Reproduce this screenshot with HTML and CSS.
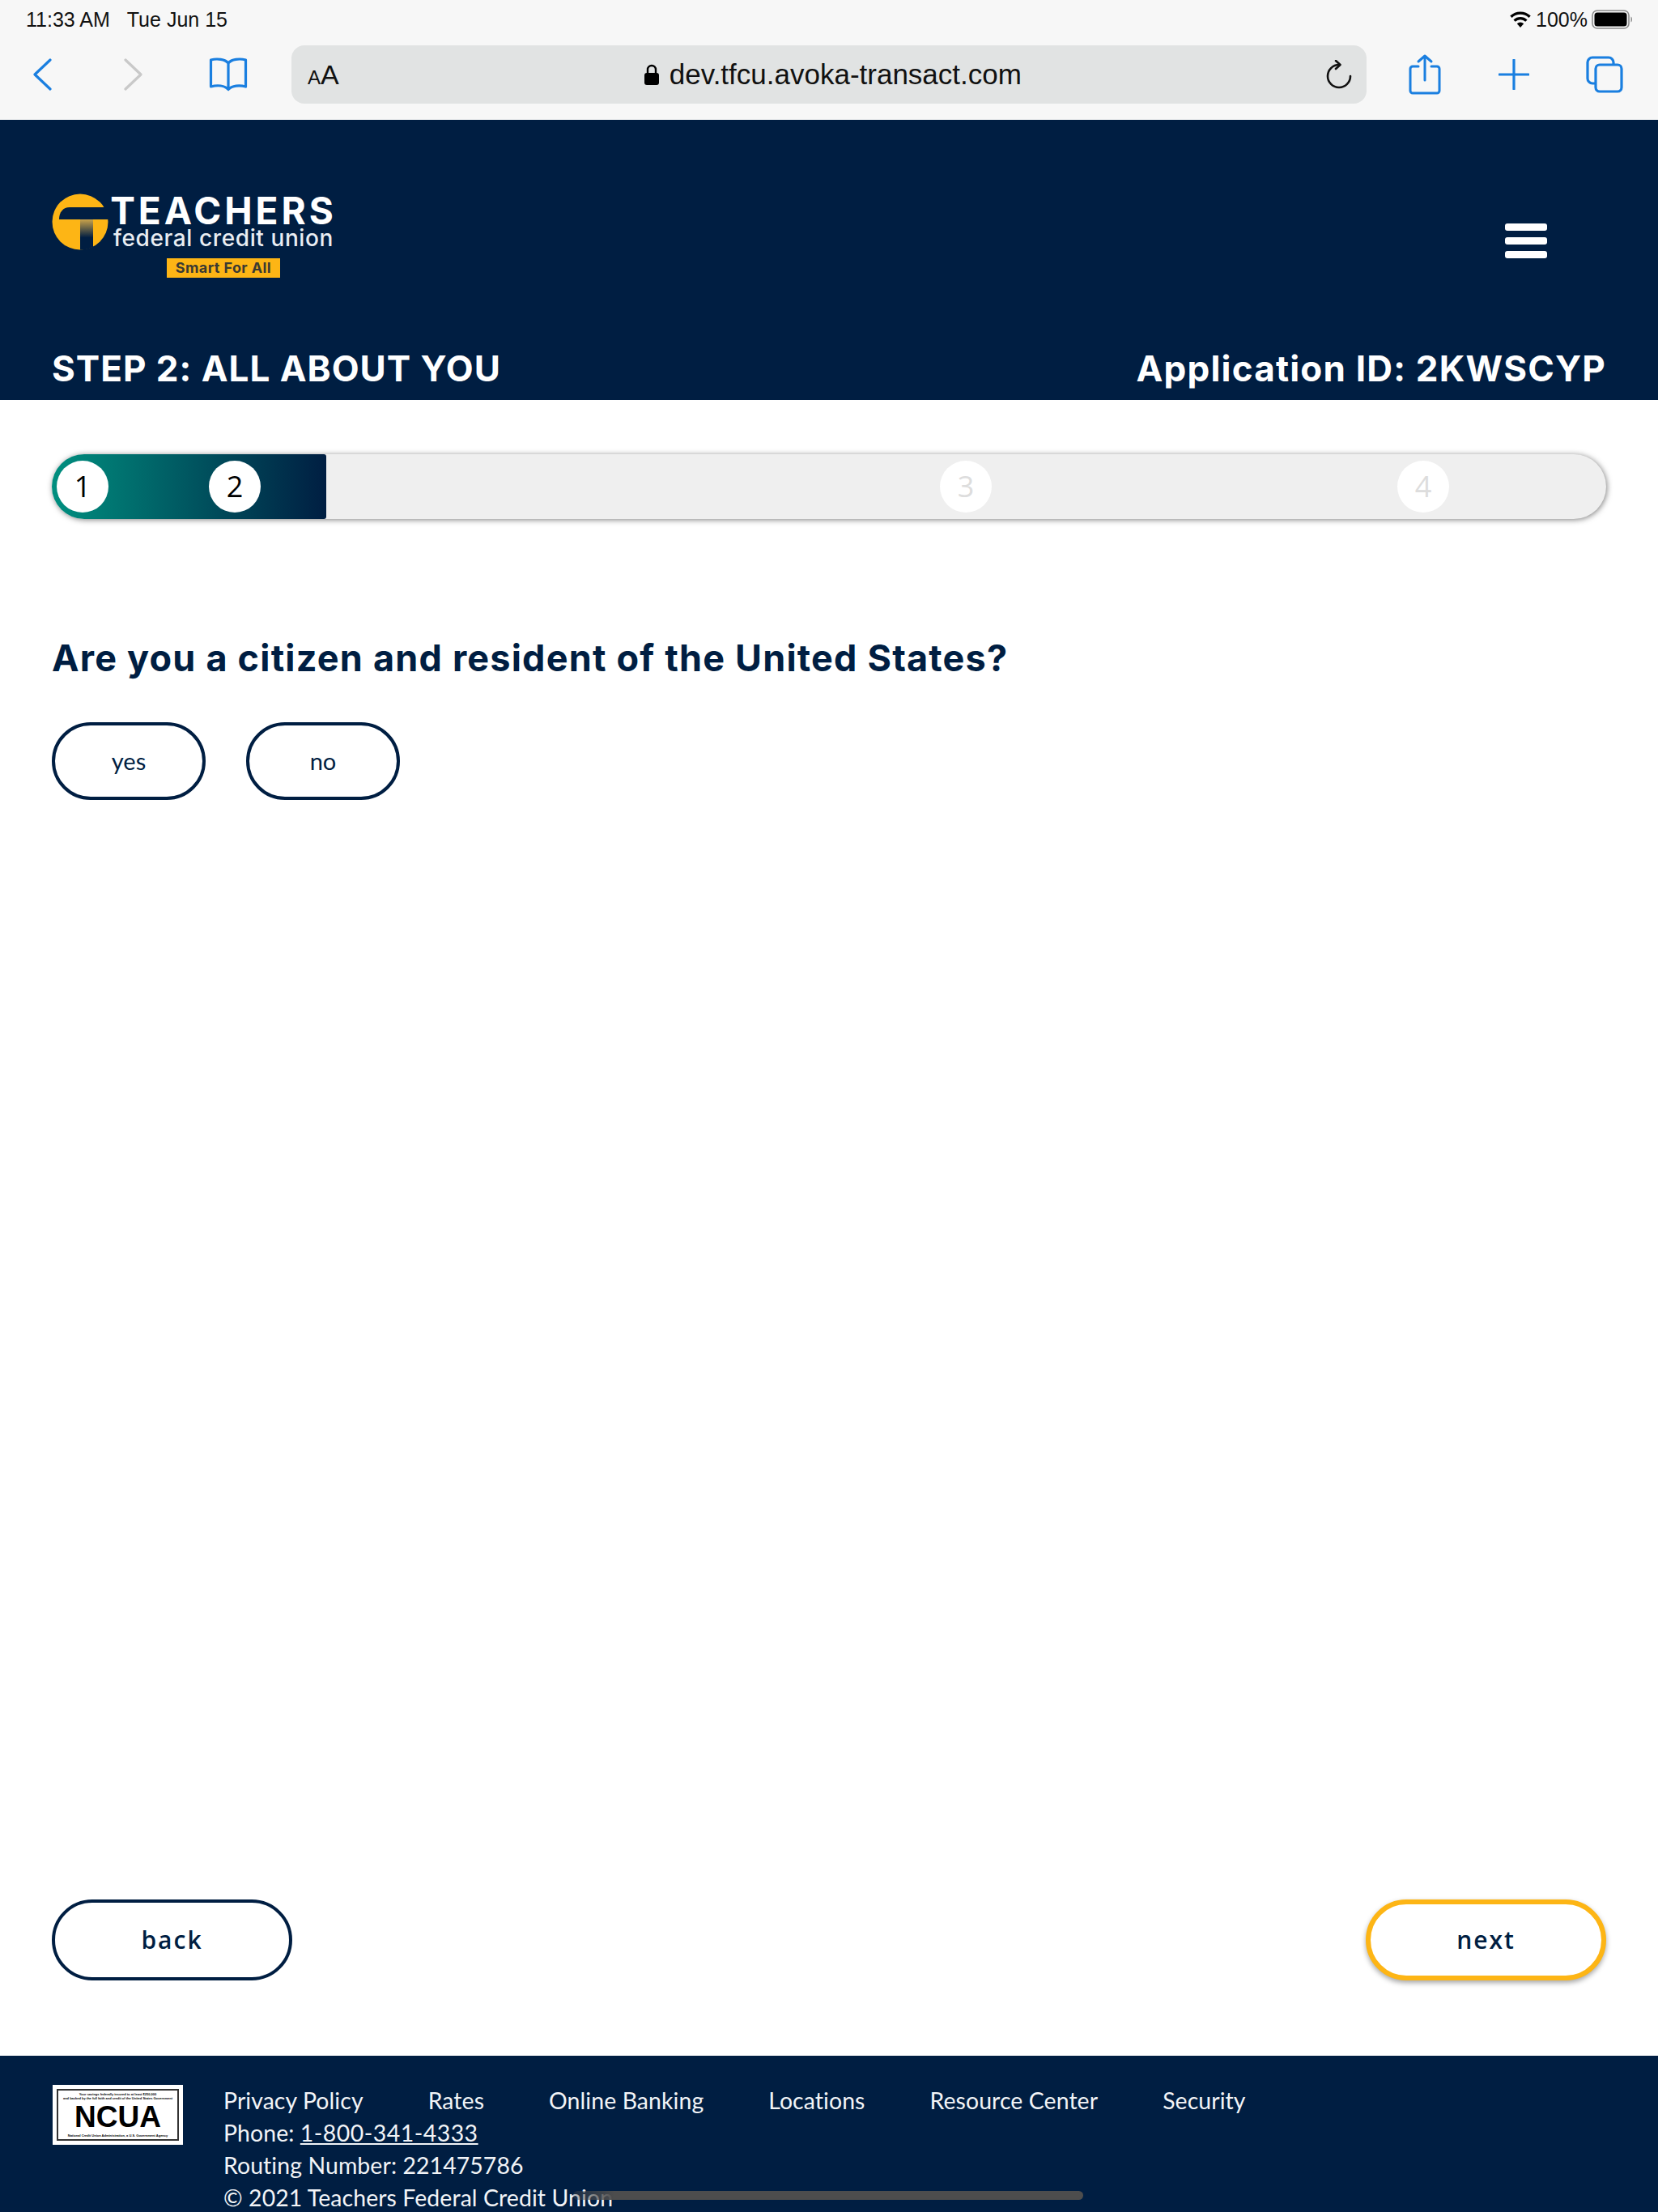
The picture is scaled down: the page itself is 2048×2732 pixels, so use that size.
FILE: index.html
```html
<!DOCTYPE html>
<html lang="en">
<head>
    <meta charset="UTF-8">
    <title>Teachers Federal Credit Union</title>
    <link rel="stylesheet" href="styles.css">
</head>
<body>
    <!-- Safari chrome -->
    <div class="browser">
        <div class="status-bar">
            <div class="status-time"><span>11:33 AM</span><span>Tue Jun 15</span></div>
            <div class="status-right">
                <svg class="wifi" width="28" height="22" viewBox="0 0 28 22"><path d="M14 21l-4.200-4.800a6 6 0 0 1 8.400 0z" fill="#000"/><path d="M6.600 12.600a10.600 10.600 0 0 1 14.800 0M2.400 7.800a16.800 16.800 0 0 1 23.200 0" fill="none" stroke="#000" stroke-width="3.400"/></svg>
                <span>100%</span>
                <svg class="battery" width="52" height="24" viewBox="0 0 52 24"><rect x="1" y="1" width="45" height="22" rx="6" fill="none" stroke="#8a8a8a" stroke-width="1.600"/><rect x="3.500" y="3.500" width="40" height="17" rx="3.500" fill="#000"/><path d="M48.500 8.500c2 .6 2 6.400 0 7z" fill="#8a8a8a"/></svg>
            </div>
        </div>
        <div class="toolbar">
            <div class="nav-icons">
                <svg width="26" height="40" viewBox="0 0 26 40"><path d="M23 2L4 20l19 18" fill="none" stroke="#1a7fe0" stroke-width="3.200" stroke-linecap="round" stroke-linejoin="round"/></svg>
                <svg width="26" height="40" viewBox="0 0 26 40"><path d="M3 2l19 18L3 38" fill="none" stroke="#c9c9c9" stroke-width="3.200" stroke-linecap="round" stroke-linejoin="round"/></svg>
                <svg width="48" height="42" viewBox="0 0 48 42"><path d="M24 7C20 2 10 1 2.500 3v33c8-2 17-1.500 21.500 3.500C28.500 34.500 38 34 45.500 36V3C38 1 28 2 24 7zM24 7v32" fill="none" stroke="#1a7fe0" stroke-width="3.200" stroke-linejoin="round"/></svg>
            </div>
            <div class="address-bar">
                <span class="aa"><small>A</small>A</span>
                <span class="url">
                    <svg width="20" height="26" viewBox="0 0 20 26"><path d="M5 12V7a5 5 0 0 1 10 0v5" fill="none" stroke="#000" stroke-width="2.400"/><rect x="1" y="11" width="18" height="15" rx="3" fill="#000"/></svg>
                    dev.tfcu.avoka-transact.com
                </span>
                <svg width="32" height="36" viewBox="0 0 32 36"><path d="M16 6A14 14 0 1 0 30 20" fill="none" stroke="#111" stroke-width="2.600" stroke-linecap="round"/><path d="M12 1l5.500 5-5.500 5" fill="none" stroke="#111" stroke-width="2.600" stroke-linecap="round" stroke-linejoin="round"/></svg>
            </div>
            <div class="action-icons">
                <svg width="40" height="50" viewBox="0 0 40 50"><path d="M12 15H5a3 3 0 0 0-3 3v27a3 3 0 0 0 3 3h30a3 3 0 0 0 3-3V18a3 3 0 0 0-3-3h-7M20 32V2M12 9l8-7 8 7" fill="none" stroke="#1a7fe0" stroke-width="3" stroke-linecap="round" stroke-linejoin="round"/></svg>
                <svg width="38" height="38" viewBox="0 0 38 38"><path d="M19 1v36M1 19h36" fill="none" stroke="#1a7fe0" stroke-width="3.200" stroke-linecap="round"/></svg>
                <svg width="46" height="46" viewBox="0 0 46 46"><rect x="12" y="11" width="32" height="33" rx="5" fill="none" stroke="#1a7fe0" stroke-width="3.200"/><path d="M12 34H8a6 6 0 0 1-6-6V8a6 6 0 0 1 6-6h20a6 6 0 0 1 6 6v3" fill="none" stroke="#1a7fe0" stroke-width="3.200"/></svg>
            </div>
        </div>
    </div>

    <!-- Site header -->
    <header class="site-header">
        <div class="header-top">
            <div class="logo">
                <svg class="logo-mark" width="70" height="70" viewBox="0 0 70 70">
                    <defs>
                        <linearGradient id="stem" x1="0" y1="0" x2="0" y2="1">
                            <stop offset="0" stop-color="#c9a24a"/>
                            <stop offset="0.6" stop-color="#001e42"/>
                        </linearGradient>
                    </defs>
                    <circle cx="35" cy="35" r="34.500" fill="#fdb515"/>
                    <path d="M9 32c0-9 5-15 13-15h47a34 34 0 0 1 .6 15z" fill="#001e42"/>
                    <path d="M35 32h16v34a34 34 0 0 1-16 3.500z" fill="url(#stem)"/>
                </svg>
                <div class="logo-text">
                    <div class="logo-name">TEACHERS</div>
                    <div class="logo-sub">federal credit union</div>
                    <div class="logo-tag">Smart For All</div>
                </div>
            </div>
            <div class="hamburger"><span></span><span></span><span></span></div>
        </div>
        <div class="header-bottom">
            <div class="step-title">STEP 2: ALL ABOUT YOU</div>
            <div class="app-id">Application ID: 2KWSCYP</div>
        </div>
    </header>

    <main class="content">
        <div class="progress">
            <div class="progress-fill"></div>
            <div class="step step-1 done">1</div>
            <div class="step step-2 done">2</div>
            <div class="step step-3">3</div>
            <div class="step step-4">4</div>
        </div>

        <h1 class="question">Are you a citizen and resident of the United States?</h1>
        <div class="answers">
            <button class="answer">yes</button>
            <button class="answer">no</button>
        </div>

        <div class="nav-buttons">
            <button class="nav-button">back</button>
            <button class="nav-button next">next</button>
        </div>
    </main>

    <footer class="site-footer">
        <div class="ncua">
            <div class="ncua-inner">
                <div class="ncua-small">Your savings federally insured to at least $250,000<br>and backed by the full faith and credit of the United States Government</div>
                <div class="ncua-name">NCUA</div>
                <div class="ncua-small">National Credit Union Administration, a U.S. Government Agency</div>
            </div>
        </div>
        <div class="footer-text">
            <div class="footer-links">
                <span>Privacy Policy</span>
                <span>Rates</span>
                <span>Online Banking</span>
                <span>Locations</span>
                <span>Resource Center</span>
                <span>Security</span>
            </div>
            <div>Phone: <a href="#">1-800-341-4333</a></div>
            <div>Routing Number: 221475786</div>
            <div>© 2021 Teachers Federal Credit Union</div>
        </div>
    </footer>

    <div class="home-indicator"></div>
</body>
</html>
```

FILE: styles.css
```css
html, body {
    margin: 0;
    height: 2732px;
    overflow: hidden;
}

body {
    position: relative;
    display: flex;
    flex-direction: column;
    background-color: #fff;
    font-family: "Lato", sans-serif;
}

/* Browser chrome */
.browser {
    height: 148px;
    flex: none;
    background-color: #f7f7f7;
    font-family: "Liberation Sans", sans-serif;
}

.status-bar {
    height: 48px;
    padding: 0 30px 0 32px;
    display: flex;
    justify-content: space-between;
    align-items: center;
    font-size: 25px;
    color: #111;
}

.status-time {
    display: flex;
    gap: 21px;
}

.status-right {
    display: flex;
    align-items: center;
    gap: 5px;
}

.toolbar {
    height: 72px;
    margin-top: 8px;
    display: flex;
    align-items: center;
}

.nav-icons {
    width: 360px;
    flex: none;
    box-sizing: border-box;
    padding-left: 39px;
    padding-right: 54px;
    display: flex;
    justify-content: space-between;
    align-items: center;
}

.nav-icons svg:nth-child(2) {
    margin-left: 6px;
}

.address-bar {
    width: 1328px;
    height: 72px;
    flex: none;
    box-sizing: border-box;
    padding: 0 18px 0 20px;
    border-radius: 16px;
    background-color: #e1e3e3;
    display: flex;
    justify-content: space-between;
    align-items: center;
}

.aa {
    font-size: 34px;
    color: #111;
}

.aa small {
    font-size: 24px;
}

.url {
    display: flex;
    align-items: center;
    gap: 12px;
    font-size: 35px;
    color: #111;
}

.action-icons {
    flex: 1;
    padding: 0 43px 0 52px;
    display: flex;
    justify-content: space-between;
    align-items: center;
}

/* Site header */
.site-header {
    height: 346px;
    flex: none;
    box-sizing: border-box;
    padding: 90px 64px 0;
    background-color: #001e42;
    color: #fff;
    display: flex;
    flex-direction: column;
}

.header-top {
    display: flex;
    justify-content: space-between;
    align-items: flex-start;
}

.logo {
    display: flex;
    align-items: flex-start;
    gap: 2px;
}

.logo-mark {
    margin-top: 1px;
}

.logo-text {
    display: flex;
    flex-direction: column;
    align-items: center;
    width: 280px;
}

.logo-name {
    font-family: "Inter", sans-serif;
    font-size: 46px;
    line-height: 44px;
    font-weight: 700;
    letter-spacing: 4px;
}

.logo-sub {
    margin-top: -3px;
    font-family: "Inter", sans-serif;
    font-size: 28px;
    line-height: 30px;
    font-weight: 500;
    letter-spacing: 0.600px;
    color: #e9edf2;
}

.logo-tag {
    margin-top: 10px;
    width: 140px;
    height: 24px;
    background-color: #fdb515;
    color: #3a3a32;
    font-family: "Inter", sans-serif;
    font-size: 18px;
    line-height: 24px;
    font-weight: 700;
    letter-spacing: 0.400px;
    text-align: center;
}

.hamburger {
    display: flex;
    flex-direction: column;
    gap: 8px;
    margin-top: 38px;
    margin-right: 73px;
}

.hamburger span {
    display: block;
    width: 52px;
    height: 9px;
    border-radius: 3px;
    background-color: #fff;
}

.header-bottom {
    margin-top: auto;
    height: 62px;
    display: flex;
    justify-content: space-between;
    font-family: "Inter", sans-serif;
    font-size: 44px;
    line-height: 46px;
    font-weight: 700;
}

.step-title {
    letter-spacing: 1px;
}

.app-id {
    letter-spacing: 1.200px;
}

/* Main content */
.content {
    flex: 1;
    box-sizing: border-box;
    padding: 67px 64px 0;
    display: flex;
    flex-direction: column;
}

.progress {
    position: relative;
    width: 1920px;
    height: 80px;
    flex: none;
    border-radius: 40px;
    background-color: #efefef;
    box-shadow: 1px 1px 7px rgba(0, 0, 0, 0.5);
    overflow: hidden;
}

.progress-fill {
    width: 339px;
    height: 80px;
    border-radius: 0 3px 3px 0;
    background: linear-gradient(to right, #008f7f, #001e42);
}

.step {
    position: absolute;
    top: 8px;
    width: 64px;
    height: 64px;
    border-radius: 50%;
    background-color: #fff;
    color: #ddd;
    font-family: "Open Sans", sans-serif;
    font-size: 36px;
    line-height: 64px;
    text-align: center;
}

.step.done {
    color: #000;
}

.step-1 { left: 6px; }
.step-2 { left: 194px; }
.step-3 { left: 1097px; }
.step-4 { left: 1662px; }

.question {
    margin: 145px 0 0;
    font-family: "Inter", sans-serif;
    font-size: 45px;
    line-height: 54px;
    font-weight: 700;
    letter-spacing: 1.200px;
    color: #001e42;
}

.answers {
    margin-top: 52px;
    display: flex;
    gap: 50px;
}

.answer {
    width: 190px;
    height: 96px;
    padding-bottom: 3px;
    border: 4px solid #001e42;
    border-radius: 48px;
    background-color: #fff;
    color: #001e42;
    font-family: "Lato", sans-serif;
    font-size: 29px;
}

.nav-buttons {
    margin-top: auto;
    margin-bottom: 93px;
    display: flex;
    justify-content: space-between;
}

.nav-button {
    width: 297px;
    height: 100px;
    padding-bottom: 3px;
    border: 4px solid #001e42;
    border-radius: 50px;
    background-color: #fff;
    color: #001e42;
    font-family: "Open Sans", sans-serif;
    font-size: 30px;
    font-weight: 600;
    letter-spacing: 2px;
}

.nav-button.next {
    border: 6px solid #fdb515;
    box-shadow: 0 3px 6px rgba(0, 0, 0, 0.35);
}

/* Footer */
.site-footer {
    height: 193px;
    flex: none;
    box-sizing: border-box;
    padding: 36px 64px 0 65px;
    background-color: #001e42;
    color: #f2f4f7;
    display: flex;
    align-items: flex-start;
    gap: 50px;
    overflow: hidden;
}

.ncua {
    width: 161px;
    height: 74px;
    flex: none;
    box-sizing: border-box;
    padding: 5px;
    background-color: #fff;
}

.ncua-inner {
    height: 100%;
    box-sizing: border-box;
    padding: 2px 0;
    border: 2px solid #333;
    display: flex;
    flex-direction: column;
    justify-content: space-between;
    align-items: center;
    color: #000;
    font-family: "Liberation Sans", sans-serif;
}

.ncua-small {
    font-size: 4px;
    line-height: 5px;
    font-weight: 700;
    text-align: center;
    white-space: nowrap;
}

.ncua-name {
    font-size: 37px;
    line-height: 30px;
    font-weight: 700;
}

.footer-text {
    margin-top: -1px;
    font-size: 28.400px;
    line-height: 40px;
    letter-spacing: 0.100px;
}

.footer-links {
    display: flex;
    gap: 80px;
}

.footer-text a {
    color: inherit;
    letter-spacing: 0.500px;
}

.home-indicator {
    position: absolute;
    left: 708px;
    top: 2706px;
    width: 630px;
    height: 11px;
    border-radius: 6px;
    background: linear-gradient(to right, rgba(77, 77, 77, 0.3), #4d4d4d 8%);
}
```
